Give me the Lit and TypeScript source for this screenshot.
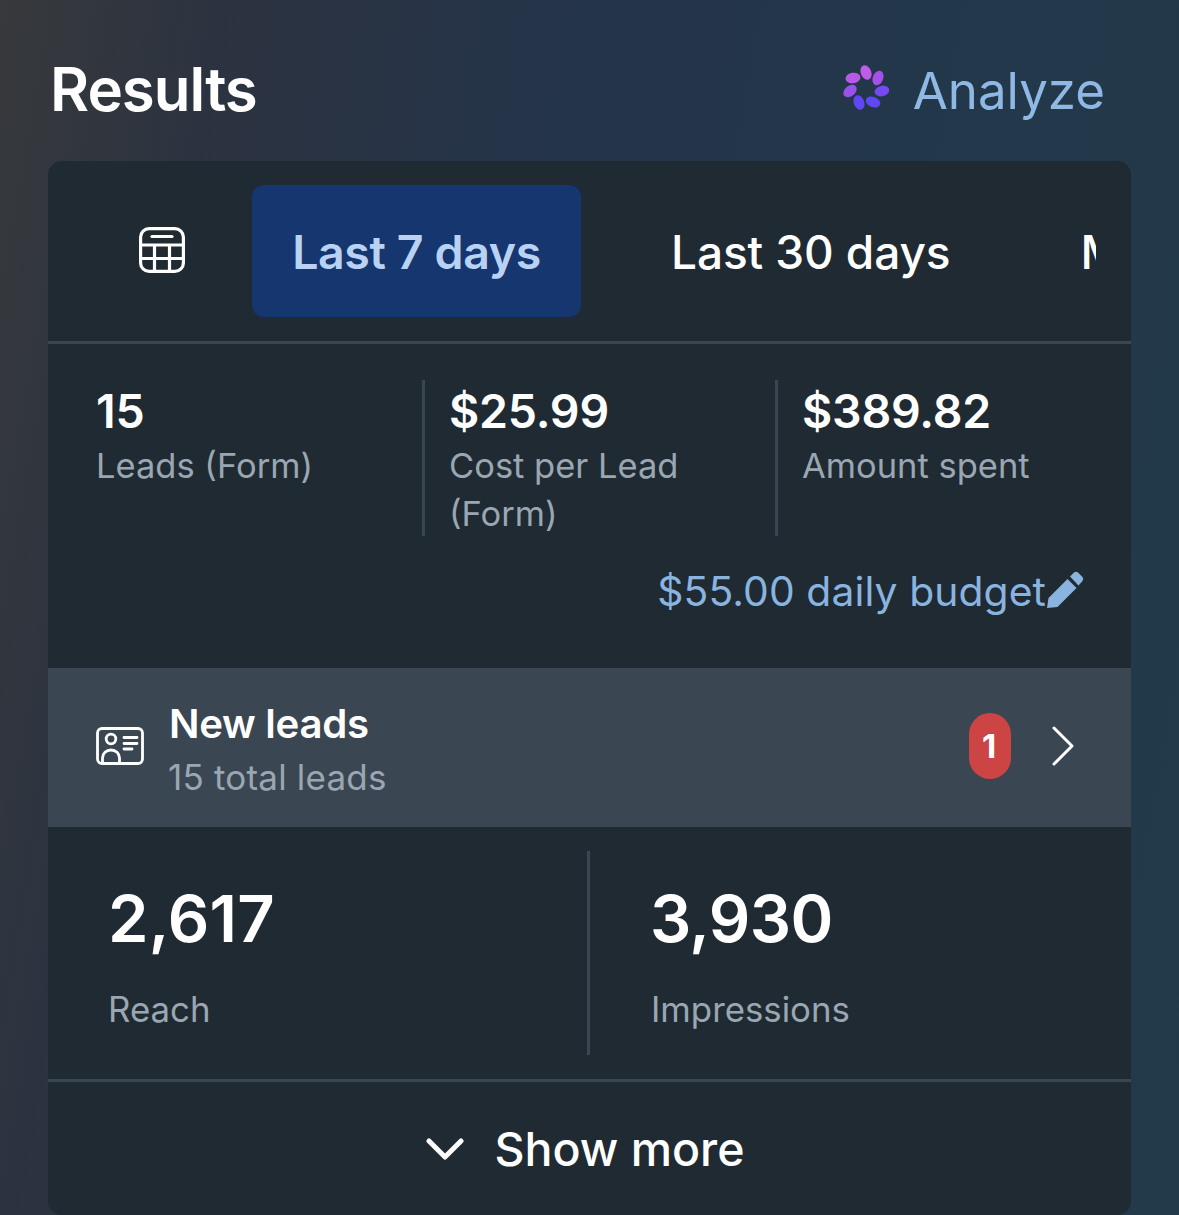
import { LitElement, html, css } from "lit";
import { customElement } from "lit/decorators.js";

@customElement("app-root")
export class AppRoot extends LitElement {
  static styles = css`
    :host {
      display: block;
      width: 1179px;
      height: 1215px;
      overflow: hidden;
      font-family: Inter, "Noto Sans", sans-serif;
      color: #fff;
      background:
        linear-gradient(100deg, #37393c 0%, #2c3340 16%, #24344a 42%, #23384a 75%, #223a49 100%);
    }
    .page { padding: 0 48px; height: 1215px; box-sizing: border-box; display: flex; flex-direction: column; }
    .head { height: 161px; display: flex; align-items: center; justify-content: space-between; padding: 0 26px 0 2px; box-sizing: border-box; }
    .title { font-size: 60px; font-weight: 600; letter-spacing: -1px; position: relative; top: 8px; }
    .analyze { display: flex; align-items: center; gap: 24px; color: #8fb9e4; font-size: 51px; font-weight: 400; position: relative; top: 10px; }
    .spark { width: 46px; height: 46px; display: block; margin-bottom: 6px; }
    .card { background: #202a32; border-radius: 14px; flex: 1; display: flex; flex-direction: column; overflow: hidden; }
    .tabs { height: 180px; display: flex; align-items: flex-start; padding: 24px 35px 0 0; box-sizing: border-box; overflow: hidden; }
    .tabclip { display: flex; width: 100%; overflow: hidden; align-items: center; height: 132px; }
    .cal { width: 204px; flex: none; display: flex; justify-content: flex-start; padding-left: 91px; box-sizing: border-box; }
    .cal svg { width: 46px; height: 46px; display: block; margin-top: -2px; }
    .tab { flex: none; height: 132px; display: flex; align-items: center; justify-content: center; font-size: 46px; box-sizing: border-box; white-space: nowrap; padding-top: 2px; }
    .tab.on { width: 329px; background: #15366e; color: #b9d2f3; border-radius: 12px; font-weight: 600; font-size: 46.5px; letter-spacing: -0.4px; }
    .tab.off { padding-left: 90px; font-weight: 500; letter-spacing: -0.1px; }
    .tab.off.last { padding-left: 130px; }
    .rule { height: 3px; background: #3a4650; flex: none; }
    .stats { display: flex; padding-top: 36px; height: 192px; box-sizing: border-box; flex: none; }
    .stat { box-sizing: border-box; height: 156px; padding-top: 1px; }
    .stat.a { width: 374px; padding-left: 48px; }
    .stat.b { width: 353px; padding-left: 24px; border-left: 3px solid #3a4650; }
    .stat.c { flex: 1; padding-left: 24px; border-left: 3px solid #3a4650; }
    .val { font-size: 46.5px; font-weight: 600; line-height: 60px; letter-spacing: -0.2px; }
    .lab { font-size: 34.5px; line-height: 48px; color: #9aa7b3; position: relative; top: 1px; }
    .budget { height: 132px; flex: none; display: flex; justify-content: flex-end; align-items: flex-start; padding: 27px 47px 0 0; box-sizing: border-box; color: #8ab4e0; font-size: 40.8px; line-height: 56px; letter-spacing: 0.1px; }
    .budget svg { width: 38px; height: 38px; display: block; margin-top: 8px; }
    .leads { height: 159px; flex: none; background: #3a4652; display: flex; align-items: center; padding: 0 56px 4px 48px; box-sizing: border-box; }
    .idcard { width: 48px; height: 38px; flex: none; display: block; }
    .ltext { margin-left: 25px; flex: 1; }
    .ltitle { font-size: 40.2px; font-weight: 600; line-height: 50px; letter-spacing: -0.3px; }
    .lsub { font-size: 35px; line-height: 44px; color: #9aa7b3; letter-spacing: 0.2px; margin-left: -1px; position: relative; top: 6px; }
    .badge { width: 42px; height: 66px; border-radius: 21px; background: #cc4444; display: flex; align-items: center; justify-content: center; font-size: 33px; font-weight: 700; padding-right: 2px; box-sizing: border-box; }
    .chev { width: 24px; height: 40px; display: block; margin-left: 40px; }
    .metrics { height: 252px; flex: none; display: flex; padding-top: 24px; box-sizing: border-box; }
    .m { height: 204px; box-sizing: border-box; padding-top: 26px; }
    .m.a { width: 539px; padding-left: 60px; }
    .m.b { flex: 1; padding-left: 60px; border-left: 3px solid #3a4650; }
    .mval { font-size: 65px; font-weight: 600; line-height: 84px; letter-spacing: -0.6px; }
    .m.a .mval { letter-spacing: 0.2px; }
    .mlab { font-size: 34.8px; line-height: 48px; color: #9aa7b3; margin-top: 24px; }
    .m.b .mlab { margin-left: 1px; }
    .more { flex: 1; display: flex; align-items: center; justify-content: center; gap: 30px; font-size: 46.5px; font-weight: 500; padding: 0 8px 0 0; }
    .more svg { width: 38px; height: 22px; display: block; }
  `;

  render() {
    return html`
      <div class="page">
        <div class="head">
          <div class="title">Results</div>
          <div class="analyze">
            <svg class="spark" viewBox="0 0 46 46">
              <ellipse cx="23" cy="7.500" rx="5.200" ry="7.500" transform="rotate(-22 23 7.500)" fill="#c05de8" />
              <ellipse cx="35" cy="13" rx="5.200" ry="7.500" transform="rotate(22 35 13)" fill="#a650ea" />
              <ellipse cx="10" cy="13" rx="7.500" ry="5.200" transform="rotate(-8 10 13)" fill="#b95ae6" />
              <ellipse cx="7" cy="26" rx="7.500" ry="5.200" transform="rotate(-40 7 26)" fill="#9a50ec" />
              <ellipse cx="39" cy="26" rx="7.500" ry="5.200" transform="rotate(-14 39 26)" fill="#7548f0" />
              <ellipse cx="16" cy="37.500" rx="5.200" ry="7.500" transform="rotate(-20 16 37.500)" fill="#5f48f3" />
              <ellipse cx="30" cy="37" rx="7.500" ry="5.200" transform="rotate(22 30 37)" fill="#5f48f3" />
            </svg>
            <span>Analyze</span>
          </div>
        </div>
        <div class="card">
          <div class="tabs">
            <div class="tabclip">
              <div class="cal">
                <svg viewBox="0 0 46 46" fill="none" stroke="#fff" stroke-width="3.200" stroke-linecap="round">
                  <rect x="1.600" y="1.600" width="42.800" height="42.800" rx="8.500" />
                  <path d="M13 9.500h20" />
                  <path d="M2 18h42M2 31.500h42M15.500 18V44M30.500 18V44" stroke-linecap="butt" />
                </svg>
              </div>
              <div class="tab on">Last 7 days</div>
              <div class="tab off">Last 30 days</div>
              <div class="tab off last">Maximum</div>
            </div>
          </div>
          <div class="rule"></div>
          <div class="stats">
            <div class="stat a"><div class="val">15</div><div class="lab">Leads (Form)</div></div>
            <div class="stat b"><div class="val">$25.99</div><div class="lab">Cost per Lead<br />(Form)</div></div>
            <div class="stat c"><div class="val">$389.82</div><div class="lab">Amount spent</div></div>
          </div>
          <div class="budget">
            <span>$55.00 daily budget</span>
            <svg viewBox="0 0 38 38" fill="#8ab4e0">
              <path d="M1 37 L2.500 27 L21.500 8 L30.500 17 L11.500 36 Z" />
              <path d="M24 5.500 L28 1.500 Q30 0 32 1.500 L36.500 6 Q38 8 36.500 10 L32.500 14.500 Z" />
            </svg>
          </div>
          <div class="leads">
            <svg class="idcard" viewBox="0 0 48 38" fill="none" stroke="#fff" stroke-width="2.800">
              <rect x="1.500" y="1.500" width="45" height="35" rx="4.500" />
              <circle cx="15" cy="12" r="4.800" />
              <path d="M6.500 36V31a8.500 8 0 0 1 17 0v5" />
              <path d="M28 10.500h13M28 16.500h13M28 22h8" stroke-linecap="round" />
            </svg>
            <div class="ltext">
              <div class="ltitle">New leads</div>
              <div class="lsub">15 total leads</div>
            </div>
            <div class="badge">1</div>
            <svg class="chev" viewBox="0 0 24 40" fill="none" stroke="#fff" stroke-width="3" stroke-linecap="round" stroke-linejoin="round">
              <path d="M3 2 L21 20 L3 38" />
            </svg>
          </div>
          <div class="metrics">
            <div class="m a"><div class="mval">2,617</div><div class="mlab">Reach</div></div>
            <div class="m b"><div class="mval">3,930</div><div class="mlab">Impressions</div></div>
          </div>
          <div class="rule"></div>
          <div class="more">
            <svg viewBox="0 0 38 22" fill="none" stroke="#fff" stroke-width="5" stroke-linecap="round" stroke-linejoin="round">
              <path d="M3 3 L19 19 L35 3" />
            </svg>
            <span>Show more</span>
          </div>
        </div>
      </div>
    `;
  }
}
